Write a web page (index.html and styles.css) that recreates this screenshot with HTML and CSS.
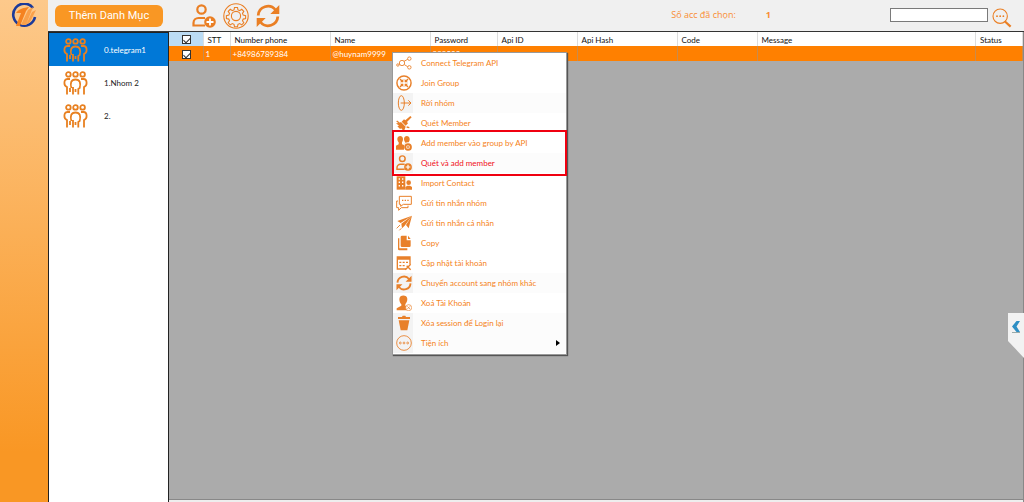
FILE: index.html
```html
<!DOCTYPE html>
<html lang="vi">
<head>
<meta charset="utf-8">
<title>Telegram Manager</title>
<link rel="stylesheet" href="styles.css">
</head>
<body>
<svg class="sprite" aria-hidden="true">
  <symbol id="people" viewBox="0 0 24 24">
    <g fill="none" stroke="currentColor" stroke-width="1.800">
      <circle cx="4.900" cy="3.400" r="2.300"/><circle cx="12" cy="3.400" r="2.300"/><circle cx="19.100" cy="3.400" r="2.300"/>
      <path d="M6.500 8H4C1.500 8 .9 10 .9 12c0 2 .6 3.200 2.600 4v7.500M17.500 8H20c2.500 0 3.100 2 3.100 4 0 2-.6 3.200-2.600 4v7.500M7.800 17C6.500 12 7.500 8.500 12 8.500s5.500 3.500 4.200 8.500l-1.400 1v5.500M9.500 16v7.500M12 18v3M6.500 17v4"/>
    </g>
  </symbol>
  <symbol id="user-add" viewBox="0 0 24 24">
    <g fill="none" stroke="currentColor" stroke-width="2.200">
      <circle cx="9.500" cy="5.500" r="4.200"/><path d="M13 21.500H1.500V19c0-3 2.500-5 5-5H13"/>
    </g>
    <circle cx="18" cy="18" r="5.800" fill="currentColor"/><path d="M18 14.500v7M14.500 18h7" stroke="#fff" stroke-width="1.800"/>
  </symbol>
  <symbol id="gear" viewBox="0 0 26 26">
    <g fill="none" stroke="currentColor" stroke-width="1.100">
      <circle cx="13" cy="13" r="12.200"/><circle cx="13" cy="13" r="4.600"/>
      <path d="M11.500 4.500h3l.5 2.400 1.700.7 2-1.300 2.100 2.100-1.300 2 .7 1.700 2.400.5v3l-2.400.5-.7 1.700 1.300 2-2.100 2.100-2-1.300-1.700.7-.5 2.400h-3l-.5-2.400-1.700-.7-2 1.300-2.100-2.100 1.300-2-.7-1.700-2.400-.5v-3l2.400-.5.7-1.700-1.300-2 2.100-2.100 2 1.300 1.700-.7z"/>
    </g>
  </symbol>
  <symbol id="refresh" viewBox="0 0 24 24">
    <path d="M2.200 11.500A9.700 9.700 0 0 1 19.500 6M21.800 12.500A9.700 9.700 0 0 1 4.500 18" fill="none" stroke="currentColor" stroke-width="2.800"/>
    <path d="M23.300 1v9h-9zM.7 23v-9h9z" fill="currentColor"/>
  </symbol>
  <symbol id="search" viewBox="0 0 22 22">
    <g fill="none" stroke="currentColor"><circle cx="9" cy="9" r="7.900" stroke-width="1.200"/><path d="M14 14.500l6.500 6" stroke-width="2.400"/></g>
    <g fill="currentColor"><circle cx="5.500" cy="9" r="1"/><circle cx="9" cy="9" r="1"/><circle cx="12.500" cy="9" r="1"/></g>
  </symbol>
  <symbol id="share" viewBox="0 0 24 24">
    <g fill="none" stroke="currentColor" stroke-width="1.300"><circle cx="9" cy="12" r="4"/><circle cx="20" cy="5.500" r="2.600"/><circle cx="20" cy="18.500" r="2.600"/><circle cx="2.800" cy="15" r="1.800"/><path d="M12 9.500l5.500-3M12.500 14.500l5 3M4.500 14l1-.5"/></g>
  </symbol>
  <symbol id="join" viewBox="0 0 24 24">
    <circle cx="12" cy="12" r="10.600" fill="none" stroke="currentColor" stroke-width="2.200"/>
    <path d="M6 6l4 4M18 6l-4 4M6 18l4-4M18 18l-4-4" stroke="currentColor" stroke-width="2.200"/>
    <path d="M11 6v5H6zM13 6v5h5zM11 18v-5H6zM13 18v-5h5z" fill="currentColor"/>
  </symbol>
  <symbol id="leave" viewBox="0 0 24 24">
    <g fill="none" stroke="currentColor" stroke-width="1.500"><ellipse cx="8" cy="12" rx="4.500" ry="11"/><path d="M7 12h15.500M18.500 8l4 4-4 4"/></g>
  </symbol>
  <symbol id="broom" viewBox="0 0 24 24">
    <path d="M21.500 1.500l2 2-7 7 1.500 2-3.500 3.500-6-6L12 6.500l2 1.500zM7.500 10.500l7 7-2 5.500-3-1-1.500-2-2 1-4-4 2.500-1-4.500-3.500 4.500-.5z" fill="currentColor"/>
    <path d="M1 9l4 3M16 18l4 1" stroke="currentColor" stroke-width="2"/>
  </symbol>
  <symbol id="users-add" viewBox="0 0 24 24">
    <path d="M2 6c0-6 8.500-6 8.500 0 0 3-1 4-1.500 5v3l3 1v7H0v-6l4-2v-3C3 10 2 8 2 6zM12 6c0-6 8.500-6 8.500 0 0 2-.5 3-1.500 5-4-.5-6 2-6.500 3.500l-.5-.5 2-1v-2c-1-1-2-3-2-5z" fill="currentColor"/>
    <circle cx="18" cy="18" r="4.300" fill="#fff" stroke="currentColor" stroke-width="3"/><path d="M18 16v4M16 18h4" stroke="currentColor" stroke-width="1.400"/>
  </symbol>
  <symbol id="contact" viewBox="0 0 24 24">
    <path d="M1 2h13v20H1z" fill="currentColor"/><path d="M4 6h2M9 6h2M4 11h2M9 11h2M4 16h2M9 16h2" stroke="#fff" stroke-width="2.200"/>
    <circle cx="19" cy="11.500" r="3.500" fill="currentColor"/><path d="M14 22v-4l3-2h4l3 2v4z" fill="currentColor"/>
  </symbol>
  <symbol id="chat" viewBox="0 0 24 24">
    <g fill="none" stroke="currentColor" stroke-width="1.500"><path d="M5 2h18v12H11l-4 3v-3H5zM3 9H1v10h3v4l4-4h10v-3"/></g>
    <path d="M9 7h2v2H9zM13 7h2v2h-2zM17 7h2v2h-2z" fill="currentColor"/>
  </symbol>
  <symbol id="send" viewBox="0 0 24 24">
    <path d="M24 1L2 9l5 3zM24 1L8 13l1 7 4-4zM24 1l-9 14 4 5z" fill="currentColor"/>
    <path d="M6 15l-5 5M8 20l-3 3" stroke="currentColor" stroke-width="1.400"/>
  </symbol>
  <symbol id="copy" viewBox="0 0 24 24">
    <path d="M9 1h7v7h6v8q0 2-2 2H9q-2 0-2-2V3q0-2 2-2zM18 1l4 5h-4zM3 5h2v15h12v3H5q-2 0-2-2z" fill="currentColor"/>
  </symbol>
  <symbol id="edit-list" viewBox="0 0 24 24">
    <path d="M15 21H2V3h19v11" fill="none" stroke="currentColor" stroke-width="2"/>
    <path d="M2 3h19v4H2zM5 10h3v2H5zM10 10h3v2h-3zM15 10h3v2h-3zM5 15h3v2H5zM10 15h3v2h-3z" fill="currentColor"/>
    <path d="M14 22l8-8M16 16l6 6" stroke="currentColor" stroke-width="2"/>
  </symbol>
  <symbol id="user-remove" viewBox="0 0 24 24">
    <path d="M5 6c0-7 12-7 12 0 0 4-2 6-3 8v2l3 2v5H1v-3l7-4v-2C6 12 5 9 5 6z" fill="currentColor"/>
    <circle cx="19" cy="19" r="4.500" fill="#fff" stroke="currentColor"/><path d="M17 17l4 4M21 17l-4 4" stroke="currentColor"/>
  </symbol>
  <symbol id="trash" viewBox="0 0 24 24">
    <path d="M3 3h6l1-2h4l1 2h6v3H3zM4 8h16l-3 15H7z" fill="currentColor"/>
  </symbol>
  <symbol id="more" viewBox="0 0 24 24">
    <circle cx="12" cy="12" r="11" fill="none" stroke="currentColor" stroke-width="1.300"/>
    <g fill="none" stroke="currentColor" stroke-width="1.200"><circle cx="6.500" cy="12" r="1.400"/><circle cx="12" cy="12" r="1.400"/><circle cx="17.500" cy="12" r="1.400"/></g>
  </symbol>
</svg>

<div class="app">
  <aside class="rail">
    <svg class="logo" viewBox="0 0 26 26" aria-label="Logo">
      <path d="M22 5A11 11 0 1 0 24 14" fill="none" stroke="#1b3a9a" stroke-width="2.600"/>
      <path d="M5 10c4-5 8-5 13-6l-3 4-6 15H5l5-13z" fill="#f58220"/>
      <path d="M17 7l5-3-7 18h-5zM21 9l4-2-6 12-4 3z" fill="#f9a04a"/>
    </svg>
  </aside>

  <div class="main">
    <header class="toolbar">
      <button class="add-category" type="button">Thêm Danh Mục</button>
      <div class="tools">
        <button class="tool" type="button" aria-label="Thêm tài khoản"><svg><use href="#user-add"/></svg></button>
        <button class="tool tool-large" type="button" aria-label="Cài đặt"><svg><use href="#gear"/></svg></button>
        <button class="tool" type="button" aria-label="Làm mới"><svg><use href="#refresh"/></svg></button>
      </div>
      <p class="selected"><span>Số acc đã chọn:</span><strong>1</strong></p>
      <form class="search">
        <input class="search-box" type="text" aria-label="Tìm kiếm">
        <button class="search-button" type="button" aria-label="Tìm"><svg><use href="#search"/></svg></button>
      </form>
    </header>

    <div class="content">
      <nav class="groups">
        <button class="group group-active" type="button"><svg><use href="#people"/></svg><span>0.telegram1</span></button>
        <button class="group" type="button"><svg><use href="#people"/></svg><span>1.Nhom 2</span></button>
        <button class="group" type="button"><svg><use href="#people"/></svg><span>2.</span></button>
      </nav>

      <main class="grid-area">
        <table class="accounts">
          <colgroup>
            <col class="w-check"><col class="w-stt"><col class="w-100"><col class="w-100"><col class="w-pass"><col class="w-80"><col class="w-100"><col class="w-80"><col><col class="w-status">
          </colgroup>
          <thead>
            <tr>
              <th class="check-cell check-head"><input type="checkbox" checked aria-label="Chọn tất cả"></th>
              <th>STT</th><th>Number phone</th><th>Name</th><th>Password</th><th>Api ID</th><th>Api Hash</th><th>Code</th><th>Message</th><th>Status</th>
            </tr>
          </thead>
          <tbody>
            <tr>
              <td class="check-cell"><input type="checkbox" checked aria-label="Chọn dòng 1"></td>
              <td>1</td><td>+84986789384</td><td>@huynam9999</td><td>999522</td><td></td><td></td><td></td><td></td><td></td>
            </tr>
          </tbody>
        </table>

        <div class="menu" role="menu">
          <button class="item" type="button" role="menuitem"><svg><use href="#share"/></svg>Connect Telegram API</button>
          <button class="item" type="button" role="menuitem"><svg><use href="#join"/></svg>Join Group</button>
          <button class="item item-shaded" type="button" role="menuitem"><svg><use href="#leave"/></svg>Rời nhóm</button>
          <button class="item" type="button" role="menuitem"><svg><use href="#broom"/></svg>Quét Member</button>
          <div class="marked">
            <button class="item" type="button" role="menuitem"><svg><use href="#users-add"/></svg>Add member vào group by API</button>
            <button class="item item-shaded item-red" type="button" role="menuitem"><svg><use href="#user-add"/></svg>Quét và add member</button>
          </div>
          <button class="item" type="button" role="menuitem"><svg><use href="#contact"/></svg>Import Contact</button>
          <button class="item" type="button" role="menuitem"><svg><use href="#chat"/></svg>Gửi tin nhắn nhóm</button>
          <button class="item" type="button" role="menuitem"><svg><use href="#send"/></svg>Gửi tin nhắn cá nhân</button>
          <button class="item" type="button" role="menuitem"><svg><use href="#copy"/></svg>Copy</button>
          <button class="item" type="button" role="menuitem"><svg><use href="#edit-list"/></svg>Cập nhật tài khoản</button>
          <button class="item item-shaded" type="button" role="menuitem"><svg><use href="#refresh"/></svg>Chuyển account sang nhóm khác</button>
          <button class="item" type="button" role="menuitem"><svg><use href="#user-remove"/></svg>Xoá Tài Khoản</button>
          <button class="item item-shaded" type="button" role="menuitem"><svg><use href="#trash"/></svg>Xóa session để Login lại</button>
          <button class="item item-shaded" type="button" role="menuitem" aria-haspopup="true"><svg><use href="#more"/></svg>Tiện ích<i class="arrow"></i></button>
        </div>

        <button class="drawer" type="button" aria-label="Mở bảng bên">
          <svg viewBox="0 0 10 14"><path d="M9 1H5.500L1 6.500 5.500 12H9L5.500 6.500z" fill="#2f8fc4"/><path d="M1 12.500h8" stroke="#9aa" stroke-width="1"/></svg>
        </button>
      </main>
    </div>
  </div>
</div>
</body>
</html>
```

FILE: styles.css
```css
* { box-sizing: border-box; }
body { margin: 0; font-family: Lato, "Open Sans", "Noto Sans", sans-serif; font-size: 8px; color: #222; }
button { border: 0; padding: 0; margin: 0; background: none; font: inherit; color: inherit; }
.sprite { display: none; }

.app { display: flex; height: 100vh; }
.rail { flex: 0 0 48px; background: linear-gradient(#fdc98b, #f99724 90%); }
.logo { display: block; width: 26px; height: 26px; margin: 3px 0 0 11px; }
.main { flex: 1; min-width: 0; display: flex; flex-direction: column; }

.toolbar { flex: 0 0 31px; display: flex; align-items: center; background: #f0f0f0; color: #ea7f24; padding: 0 12px 0 7px; }
.add-category { width: 108px; height: 22px; border-radius: 6px; background: #f99724; color: #fff; font: 11px Roboto, sans-serif; }
.tools { display: flex; align-items: center; gap: 7px; margin-left: 29px; }
.tool { width: 24px; height: 24px; }
.tool-large { width: 26px; height: 26px; }
.tool svg, .search-button svg { display: block; width: 100%; height: 100%; }
.selected { display: flex; gap: 30px; margin: 0 0 2px auto; color: #f98d33; font: 9px "Open Sans", "Noto Sans", sans-serif; }
.search { display: flex; gap: 4px; margin-left: 119px; }
.search-box { width: 98px; height: 14px; margin-top: 5px; border: 1px solid #7a7a7a; background: #fff; padding: 0 2px; font: inherit; }
.search-button { width: 20px; height: 20px; margin-top: 5px; }

.content { flex: 1; display: flex; min-height: 0; border-top: 1px solid #333; }
.groups { flex: 0 0 121px; border: solid #222; border-width: 1px 1px 0; background: #fff; }
.group { display: flex; align-items: center; gap: 16px; width: 100%; height: 33px; padding-left: 14px; text-align: left; }
.group svg { width: 25px; height: 24px; color: #e88020; }
.group-active { background: #0078d7; color: #fff; }

.grid-area { position: relative; flex: 1; min-width: 0; background: #ababab; border-right: 1px solid #888; box-shadow: inset 0 -2px #eee, inset 0 -3px #888; }
.accounts { width: 100%; table-layout: fixed; border-collapse: collapse; }
.accounts th, .accounts td { height: 14px; padding: 1px 4px 0; border-right: 1px solid #ddd; font-weight: 400; text-align: left; line-height: 12px; white-space: nowrap; }
.accounts th { background: #fff; color: #111; }
.accounts td { height: 15px; padding: 0 2px; background: #ff8000; color: #fff; border-color: #c98b4c; }
.accounts .check-cell { padding: 0 0 0 2px; text-align: center; }
.accounts .check-head { background: #bcdcf4; }
.w-check { width: 34px; }
.w-stt { width: 27px; }
.w-100 { width: 100px; }
.w-80 { width: 80px; }
.w-pass { width: 67px; }
.w-status { width: 47px; }
.accounts input { appearance: none; display: inline-grid; place-items: center; width: 9px; height: 9px; margin: 0; border: 1px solid #333; background: #fff; vertical-align: middle; }
.accounts input:checked::after { content: ""; width: 3px; height: 6px; border: solid #333; border-width: 0 1px 1px 0; transform: rotate(45deg); }

.menu { position: absolute; left: 223px; top: 20px; width: 175px; padding-bottom: 1px; border: 1px solid #999; background: #fff; color: #f58220; box-shadow: 1px 1px 1px #555; }
.item { display: flex; align-items: center; gap: 9px; width: 100%; height: 20px; padding: 0 6px 0 3px; text-align: left; white-space: nowrap; }
.item svg { width: 16px; height: 16px; color: #e8802a; }
.item-shaded { background: linear-gradient(90deg, #f3f3f3 20px, #fcfcfc 20px); }
.item-red { color: #f01020; }
.marked { position: relative; }
.marked::after { content: ""; position: absolute; inset: -3px -1px; border: 2px solid #f00010; pointer-events: none; }
.arrow { margin-left: auto; border: 3px solid transparent; border-left: 4px solid #000; border-right: 0; }

.drawer { position: absolute; right: -1px; top: 281px; width: 16px; height: 45px; padding: 7px 0 0 3px; background: #f2f2f2; clip-path: polygon(0 0, 100% 0, 100% 100%, 0 62%); display: flex; align-items: flex-start; }
.drawer svg { width: 10px; height: 14px; }
```
